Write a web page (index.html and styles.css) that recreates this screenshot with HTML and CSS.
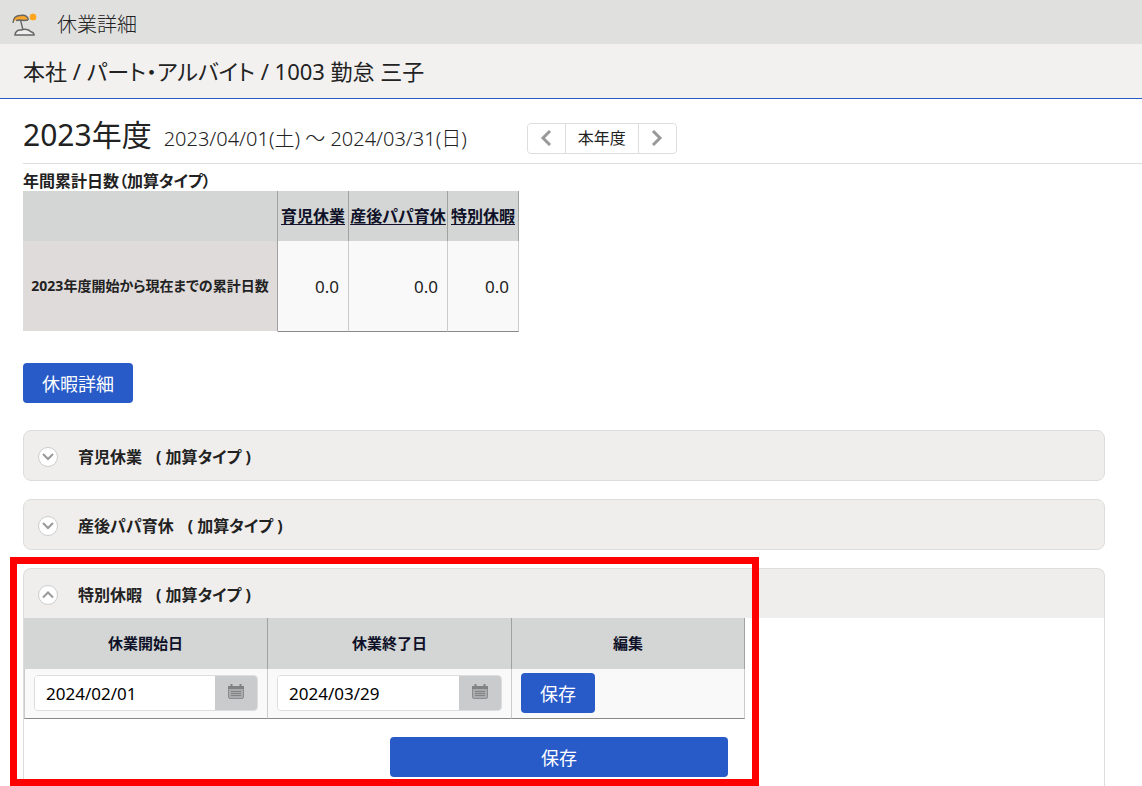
FILE: index.html
```
<!DOCTYPE html>
<html lang="ja">

<head>
    <meta charset="UTF-8">
    <meta name="viewport" content="width=device-width, initial-scale=1.0">
    <title>休業詳細</title>
    <link rel="stylesheet" href="styles.css">
</head>

<body>
    <header class="page-header">
        <svg class="page-icon" width="26" height="24" viewBox="0 0 26 24" fill="none">
            <path d="M1 9C1 4 5 2 9 2c4-1 7 2 7 6l-4-1-4 0-4 0z" fill="#f9a72b" />
            <path d="M1 10C1 5 4 2 9 2.500c4-1 7 1 7.500 4.500M4 7.500l4-.5 4 .5 4-.5M8.500 7l2.500 10" stroke="#666"
                stroke-width="1.400" />
            <path d="M3 22c0-3 3-5.500 6-5 4-1.500 8-.5 9.500 1.500 2 .5 3.500 1.500 3.500 3.500z" fill="#eee" stroke="#666"
                stroke-width="1.500" />
            <rect x="18" y="1" width="6" height="6" rx="1.500" fill="#ffa51f" />
            <path d="M21 0v1M21 7v1M17 4h1M24 4h1M18 1l.7.7M24 1l-.7.7M18 7l.7-.7M24 7l-.7-.7" stroke="#ffb84d" />
        </svg>
        <h1>休業詳細</h1>
    </header>
    <div class="employee">本社 / パート・アルバイト / 1003 勤怠 三子</div>

    <main>
        <div class="period">
            <h2>2023年度</h2>
            <span class="period-range">2023/04/01(土) ～ 2024/03/31(日)</span>
            <div class="pager">
                <button type="button" aria-label="前年度">
                    <svg width="12" height="16" viewBox="0 0 12 16"><path d="M10 1L3 8l7 7" /></svg>
                </button>
                <button type="button" class="pager-current">本年度</button>
                <button type="button" aria-label="翌年度">
                    <svg width="12" height="16" viewBox="0 0 12 16"><path d="M2 1l7 7-7 7" /></svg>
                </button>
            </div>
        </div>

        <div class="content">
            <table class="grid summary">
                <caption>年間累計日数（加算タイプ）</caption>
                <thead>
                    <tr>
                        <td class="col-label"></td>
                        <th><a href="#childcare">育児休業</a></th>
                        <th class="col-wide"><a href="#papa">産後パパ育休</a></th>
                        <th><a href="#special">特別休暇</a></th>
                    </tr>
                </thead>
                <tbody>
                    <tr>
                        <th>2023年度開始から現在までの累計日数</th>
                        <td>0.0</td>
                        <td>0.0</td>
                        <td>0.0</td>
                    </tr>
                </tbody>
            </table>

            <button type="button" class="btn btn-detail">休暇詳細</button>

            <section class="panel" id="childcare">
                <h3>
                    <button type="button" class="toggle" aria-label="開く">
                        <svg width="12" height="8" viewBox="0 0 12 8"><path d="M1 1l5 5 5-5" /></svg>
                    </button>
                    <span>育児休業</span><span>( 加算タイプ )</span>
                </h3>
            </section>

            <section class="panel" id="papa">
                <h3>
                    <button type="button" class="toggle" aria-label="開く">
                        <svg width="12" height="8" viewBox="0 0 12 8"><path d="M1 1l5 5 5-5" /></svg>
                    </button>
                    <span>産後パパ育休</span><span>( 加算タイプ )</span>
                </h3>
            </section>

            <section class="panel panel-open" id="special">
                <h3>
                    <button type="button" class="toggle" aria-label="閉じる">
                        <svg width="12" height="8" viewBox="0 0 12 8"><path d="M1 6.500l5-5 5 5" /></svg>
                    </button>
                    <span>特別休暇</span><span>( 加算タイプ )</span>
                </h3>
                <div class="panel-body">
                    <form class="leave-form">
                        <table class="grid leave">
                            <thead>
                                <tr>
                                    <th>休業開始日</th>
                                    <th>休業終了日</th>
                                    <th class="col-edit">編集</th>
                                </tr>
                            </thead>
                            <tbody>
                                <tr>
                                    <td>
                                        <div class="date-field">
                                            <input type="text" aria-label="休業開始日" value="2024/02/01">
                                            <button type="button" aria-label="カレンダー">
                                                <svg width="16" height="15" viewBox="0 0 16 15">
                                                    <rect x=".5" y="2.500" width="15" height="12" rx="1.500" fill="#a9abac" stroke="#8b8e90" />
                                                    <path d="M0 2h16v3H0z" fill="#808284" />
                                                    <path d="M3.500 0v4M12.500 0v4" stroke="#808284" stroke-width="2" />
                                                    <path d="M3 7.500h10M3 9.500h10M3 11.500h10" stroke="#808284" />
                                                </svg>
                                            </button>
                                        </div>
                                    </td>
                                    <td>
                                        <div class="date-field">
                                            <input type="text" aria-label="休業終了日" value="2024/03/29">
                                            <button type="button" aria-label="カレンダー">
                                                <svg width="16" height="15" viewBox="0 0 16 15">
                                                    <rect x=".5" y="2.500" width="15" height="12" rx="1.500" fill="#a9abac" stroke="#8b8e90" />
                                                    <path d="M0 2h16v3H0z" fill="#808284" />
                                                    <path d="M3.500 0v4M12.500 0v4" stroke="#808284" stroke-width="2" />
                                                    <path d="M3 7.500h10M3 9.500h10M3 11.500h10" stroke="#808284" />
                                                </svg>
                                            </button>
                                        </div>
                                    </td>
                                    <td><button type="button" class="btn">保存</button></td>
                                </tr>
                            </tbody>
                        </table>
                        <button type="submit" class="btn btn-save">保存</button>
                    </form>
                </div>
                <div class="highlight"></div>
            </section>
        </div>
    </main>
</body>

</html>
```
FILE: styles.css
```
* {
    box-sizing: border-box;
}

body {
    margin: 0;
    background-color: #fff;
    color: #222;
    font-family: "Noto Sans", "Noto Sans CJK JP", sans-serif;
    font-size: 16px;
    line-height: 24px;
    font-feature-settings: "palt";
}

h1,
h2,
h3 {
    margin: 0;
    font-weight: normal;
}

button,
input {
    font: inherit;
    font-feature-settings: inherit;
    color: inherit;
}

.page-header {
    display: flex;
    align-items: center;
    gap: 19px;
    height: 44px;
    padding: 5px 12px 0;
    background-color: #e0e1df;
}

.page-header h1 {
    font-size: 20px;
    font-weight: 300;
}

.employee {
    height: 55px;
    padding: 11px 23px;
    border-bottom: 1px solid #285ac8;
    background-color: #f2f1f0;
    font-size: 22px;
    line-height: 32px;
}

/* fiscal year */
.period {
    display: flex;
    align-items: baseline;
    gap: 12px;
    height: 65px;
    margin-left: 23px;
    padding-top: 14px;
    border-bottom: 1px solid #ddd;
}

.period h2 {
    font-size: 30px;
    line-height: 44px;
}

.period-range {
    font-size: 20px;
    font-weight: 300;
}

.pager {
    display: flex;
    margin-left: 48px;
    border: 1px solid #ddd;
    border-radius: 4px;
}

.pager button {
    display: flex;
    align-items: center;
    justify-content: center;
    width: 37px;
    height: 29px;
    padding: 0;
    border: 0;
    background-color: #fff;
    border-radius: 4px;
}

.pager .pager-current {
    width: 74px;
    border: solid #ddd;
    border-width: 0 1px;
    border-radius: 0;
}

.pager path {
    fill: none;
    stroke: #999;
    stroke-width: 3;
}

.content {
    padding: 5px 37px 0 23px;
}

/* tables */
.grid {
    table-layout: fixed;
    border-collapse: separate;
    border-spacing: 0;
}

.grid thead th,
.grid thead td {
    height: 50px;
    border-right: 1px solid #a0a2a1;
    background-color: #d3d6d4;
    color: #0e1128;
}

.grid tbody td {
    border-right: 1px solid #ccc;
    border-bottom: 1px solid #888;
    background-color: #f9f9f9;
}

.summary {
    width: 496px;
}

.summary caption {
    height: 22px;
    font-weight: bold;
    text-align: left;
    white-space: nowrap;
}

.summary th {
    width: 71px;
    padding: 0;
    white-space: nowrap;
}

.summary .col-label {
    width: 255px;
}

.summary .col-wide {
    width: 99px;
}

.summary a {
    color: inherit;
    text-underline-offset: 2px;
}

.summary tbody th {
    border-right: 1px solid #a0a2a1;
    border-bottom: 1px solid #fff;
    background-color: #dfdbda;
    font-size: 14px;
}

.summary tbody td {
    height: 91px;
    padding: 2px 9px 0;
    font-size: 17px;
    text-align: right;
}

/* buttons */
.btn {
    display: block;
    height: 40px;
    padding: 1px 19px 0;
    border: 0;
    border-radius: 4px;
    background-color: #285ac8;
    color: #fff;
    font-size: 18px;
}

.btn-detail {
    margin: 31px 0 27px;
}

/* panels */
.panel {
    margin-bottom: 18px;
    border: 1px solid #ddd;
    border-radius: 8px;
    background-color: #efeeec;
}

.panel h3 {
    display: flex;
    align-items: center;
    gap: 14px;
    height: 49px;
    padding: 2px 14px 0;
    font-size: 16px;
    font-weight: bold;
}

.toggle {
    display: flex;
    align-items: center;
    justify-content: center;
    width: 20px;
    height: 20px;
    margin-right: 6px;
    padding: 0;
    border: 1px solid #ccc;
    border-radius: 50%;
    background-color: #fff;
}

.toggle path {
    fill: none;
    stroke: #999;
    stroke-width: 2;
}

.panel-open {
    position: relative;
    margin-bottom: 0;
    border-bottom: 0;
    border-radius: 8px 8px 0 0;
}

.panel-body {
    background-color: #fff;
}

.leave-form {
    width: 721px;
    max-width: 100%;
    padding-bottom: 9px;
}

.leave {
    width: 100%;
}

.leave thead th {
    height: 51px;
    padding: 0 0 2px;
    font-size: 15px;
}

.leave thead .col-edit {
    width: 233px;
}

.leave tbody td {
    height: 50px;
    padding: 0 9px 1px;
}

.leave tbody td:first-child {
    border-left: 1px solid #ccc;
}

.date-field {
    display: flex;
    height: 36px;
    border: 1px solid #ddd;
    border-radius: 4px;
    overflow: hidden;
}

.date-field input {
    flex: 1;
    min-width: 0;
    padding: 1px 11px 0;
    border: 0;
    color: #000;
    font-size: 17px;
}

.date-field button {
    display: flex;
    align-items: center;
    justify-content: center;
    width: 42px;
    padding: 0 0 3px;
    border: 0;
    background-color: #c9cbcc;
}

.btn-save {
    width: 338px;
    margin: 18px 17px 0 auto;
}

/* frame around the leave being edited */
.highlight {
    position: absolute;
    inset: -12px 345px 0 -14px;
    border: 7px solid #f00;
    pointer-events: none;
}
```
